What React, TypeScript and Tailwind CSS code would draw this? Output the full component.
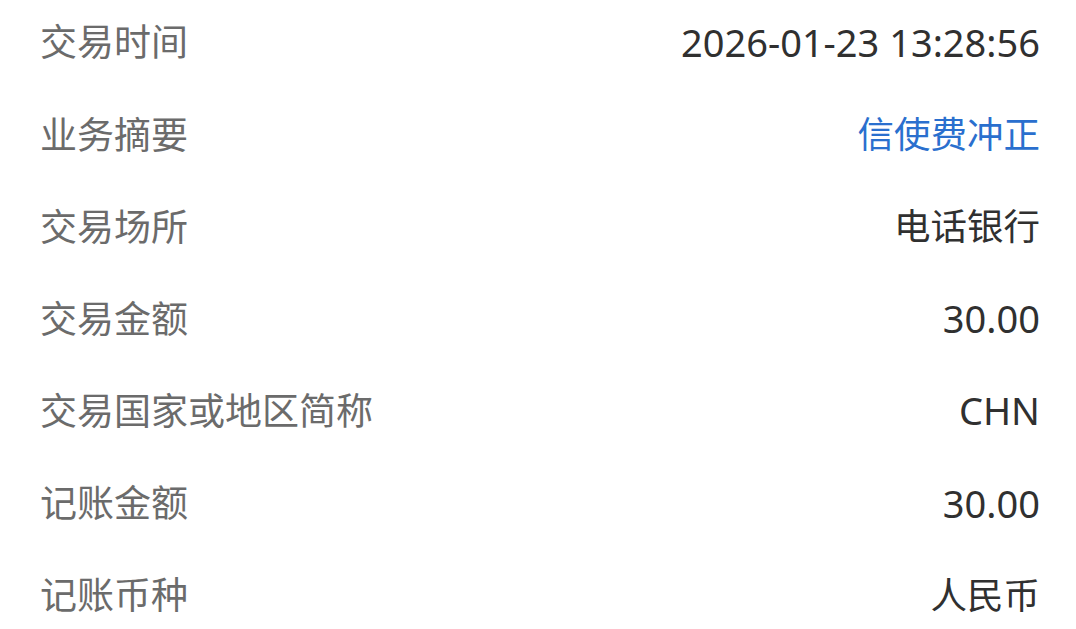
const rows: { label: string; value: string; blue?: boolean; latin?: boolean }[] = [
  { label: "交易时间", value: "2026-01-23 13:28:56", latin: true },
  { label: "业务摘要", value: "信使费冲正", blue: true },
  { label: "交易场所", value: "电话银行" },
  { label: "交易金额", value: "30.00", latin: true },
  { label: "交易国家或地区简称", value: "CHN", latin: true },
  { label: "记账金额", value: "30.00", latin: true },
  { label: "记账币种", value: "人民币" },
];

export default function App() {
  return (
    <div
      className="w-[1076px] h-[629px] overflow-hidden bg-white pl-10 pr-9 -mt-[4px]"
      style={{ fontFamily: '"Noto Sans", "Noto Sans CJK SC", sans-serif' }}
    >
      {rows.map((r) => (
        <div key={r.label} className="flex h-[92.2px] items-center justify-between">
          <span className="text-[37px] text-[#6b6b6b]">{r.label}</span>
          <span
            className={`${r.latin ? "text-[38px]" : "text-[36.5px]"} ${
              r.blue ? "text-[#2a6fce]" : "text-[#303030]"
            }`}
          >
            {r.value}
          </span>
        </div>
      ))}
    </div>
  );
}
